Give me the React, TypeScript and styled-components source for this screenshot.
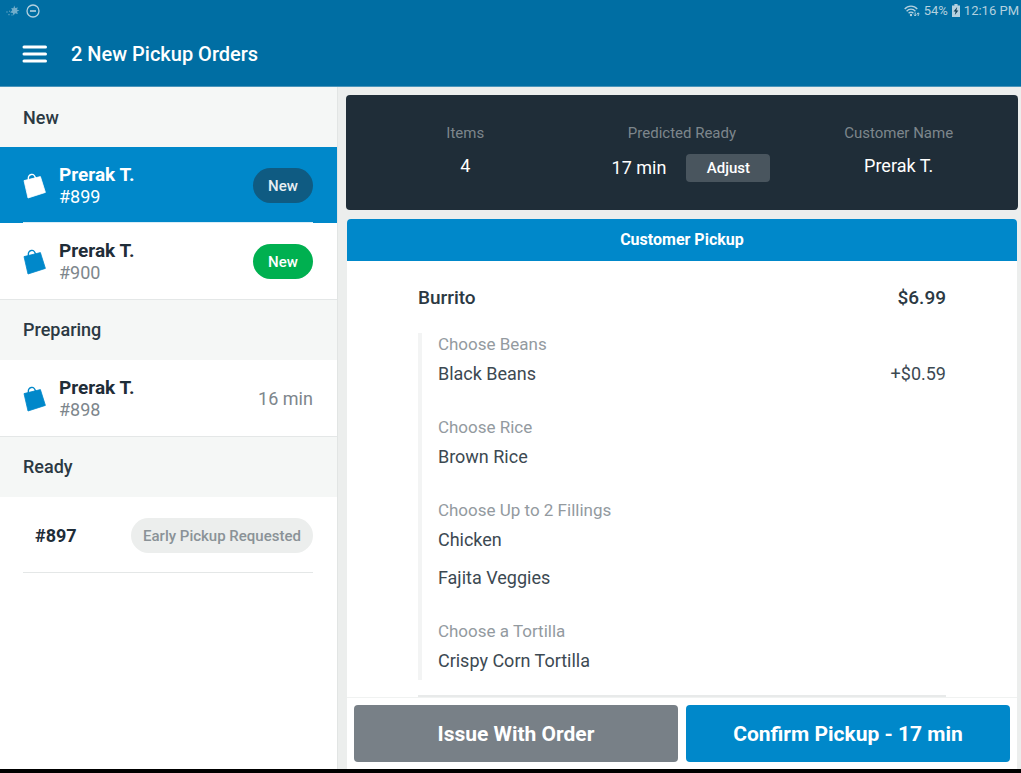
import React from 'react';
import styled, { createGlobalStyle } from 'styled-components';

const GlobalStyle = createGlobalStyle`
  *, *::before, *::after { box-sizing: border-box; }
  body {
    margin: 0;
    background: #000;
    color: #1f2d38;
    font-family: Roboto, "Liberation Sans", sans-serif;
    font-size: 18px;
    line-height: 22px;
  }
  h1, h2, h3, p, ul, dl, dd { margin: 0; padding: 0; }
  button { font: inherit; border: 0; padding: 0; cursor: pointer; }
`;

const Screen = styled.div`
  display: flex;
  flex-direction: column;
  height: 100vh;
  padding-bottom: 4px;
`;

const TopBar = styled.header`
  flex: none;
  background: #006ea3;
  border-bottom: 1px solid #4b95ba;
  color: #fff;
`;

const StatusBar = styled.div`
  display: flex;
  align-items: center;
  justify-content: space-between;
  height: 21px;
  padding: 0 2px 0 6px;
  color: #b4d1df;
  font-size: 13px;
  line-height: 20px;
`;

const StatusGroup = styled.div<{ $gap: number }>`
  display: flex;
  align-items: center;
  gap: ${({ $gap }) => $gap}px;
`;

const TitleRow = styled.div`
  display: flex;
  align-items: center;
  gap: 24px;
  height: 65px;
  padding: 0 22px;
`;

const MenuButton = styled.button`
  display: flex;
  background: none;
  color: inherit;
`;

const Title = styled.h1`
  font-size: 20px;
  line-height: 24px;
  font-weight: 500;
`;

const Body = styled.div`
  flex: 1;
  min-height: 0;
  display: grid;
  grid-template-columns: 33% minmax(0, 1fr);
  background: #eceeed;
`;

const Sidebar = styled.nav`
  background: #fff;
  overflow: hidden;
`;

const SectionTitle = styled.h2`
  height: 61px;
  padding: 19px 23px;
  border-top: 1px solid #e4e7e7;
  background: #f5f7f6;
  color: #2b3943;
  font-size: 18px;
  line-height: 22px;
  font-weight: 500;

  &:first-child {
    height: 60px;
    padding-top: 20px;
    border-top: 0;
  }
`;

const OrderRow = styled.button<{ $active?: boolean }>`
  display: block;
  width: 100%;
  height: 76px;
  padding: 0 24px 0 23px;
  text-align: left;
  background: ${({ $active }) => ($active ? '#0088ca' : '#fff')};
  color: ${({ $active }) => ($active ? '#fff' : '#1f2d38')};
`;

const RowInner = styled.span<{ $divider?: string }>`
  display: flex;
  align-items: center;
  gap: 12px;
  height: 76px;
  padding-top: 2px;
  border-bottom: 1px solid ${({ $divider }) => $divider ?? 'transparent'};
`;

const OrderText = styled.span`
  flex: 1;
  display: flex;
  flex-direction: column;
`;

const OrderName = styled.span`
  font-size: 19px;
  font-weight: 700;
`;

const OrderNumber = styled.span<{ $active?: boolean }>`
  color: ${({ $active }) => ($active ? '#fff' : '#7d868c')};
`;

const ReadyNumber = styled.span`
  flex: 1;
  padding-left: 12px;
  font-weight: 700;
`;

const Wait = styled.span`
  color: #7d868c;
`;

const pillTones = {
  navy: { bg: '#0f5b82', fg: '#e7eff3' },
  green: { bg: '#00b050', fg: '#fff' },
  grey: { bg: '#eceeed', fg: '#8a9297' },
};

const Pill = styled.span<{ $tone: keyof typeof pillTones }>`
  display: flex;
  align-items: center;
  justify-content: center;
  min-width: 60px;
  height: 35px;
  padding: 0 12px;
  border-radius: 18px;
  background: ${({ $tone }) => pillTones[$tone].bg};
  color: ${({ $tone }) => pillTones[$tone].fg};
  font-size: 15px;
  line-height: 20px;
  font-weight: 500;
`;

const Main = styled.main`
  display: flex;
  flex-direction: column;
  gap: 9px;
  min-height: 0;
  padding: 8px 3px 0 8px;
  border-left: 1px solid #e2e5e4;
`;

const Summary = styled.dl`
  flex: none;
  display: grid;
  grid-template-columns: repeat(3, minmax(0, 1fr));
  height: 115px;
  padding: 27px 11px 0;
  border-radius: 4px;
  background: #1f2d38;
  text-align: center;
`;

const Stat = styled.div`
  display: flex;
  flex-direction: column;
  gap: 10px;
`;

const StatLabel = styled.dt`
  color: #7d868c;
  font-size: 15px;
  line-height: 22px;
`;

const StatValue = styled.dd<{ $withAction?: boolean }>`
  display: flex;
  align-items: center;
  justify-content: center;
  gap: 20px;
  height: ${({ $withAction }) => ($withAction ? 28 : 24)}px;
  padding-left: ${({ $withAction }) => ($withAction ? 18 : 0)}px;
  color: #fff;
  line-height: 24px;
`;

const AdjustButton = styled.button`
  width: 84px;
  height: 28px;
  border-radius: 4px;
  background: #49555e;
  color: #fff;
  font-size: 15px;
  line-height: 20px;
  font-weight: 500;
`;

const Ticket = styled.section`
  flex: 1;
  min-height: 0;
  display: flex;
  flex-direction: column;
  margin: 0 1px;
  background: #fff;
  border-radius: 4px 4px 0 0;
  overflow: hidden;
`;

const TicketHeader = styled.h2`
  flex: none;
  padding: 10px;
  background: #0088ca;
  color: #fff;
  text-align: center;
  font-size: 16px;
  line-height: 22px;
  font-weight: 700;
`;

const TicketBody = styled.div`
  flex: 1;
  min-height: 0;
  overflow: hidden;
  padding: 26px 71px 0;
`;

const Item = styled.article`
  padding-bottom: 15px;
  border-bottom: 2px solid #e8eaea;
`;

const Line = styled.div`
  display: flex;
  justify-content: space-between;
`;

const ItemLine = styled(Line)`
  margin-bottom: 24px;
  color: #2b3943;
  font-size: 19px;
  font-weight: 500;
`;

const Options = styled.div`
  display: flex;
  flex-direction: column;
  gap: 23px;
  padding-left: 16px;
  border-left: 4px solid #f3f4f4;
`;

const OptionLabel = styled.h3`
  color: #939a9f;
  font-size: 17px;
  line-height: 22px;
  font-weight: 400;
`;

const OptionLine = styled(Line)`
  padding: 8px 0;
  color: #3c4952;
`;

const Footer = styled.footer`
  flex: none;
  display: grid;
  grid-template-columns: 1fr 1fr;
  gap: 8px;
  padding: 7px;
  border-top: 1px solid #f0f2f1;
`;

const ActionButton = styled.button<{ $primary?: boolean }>`
  height: 57px;
  border-radius: 4px;
  background: ${({ $primary }) => ($primary ? '#0088ca' : '#788087')};
  color: #fff;
  font-size: 21px;
  line-height: 24px;
  font-weight: 700;
`;

const BagIcon = ({ color }: { color: string }) => (
  <svg width="24" height="26" viewBox="0 0 24 26" aria-hidden="true">
    <path d="M1 7.6 17.4 3.6 22.4 19.4 5 25Z" fill={color} stroke={color} strokeWidth="0.8" strokeLinejoin="round" />
    <path d="M5.6 7.2C4.8 3.8 6 2 8.2 1.5 10.4 1 11.8 2.4 12.6 5.4" fill="none" stroke={color} strokeWidth="1.4" />
  </svg>
);

const MenuIcon = () => (
  <svg width="25" height="20" viewBox="0 0 25 20" aria-hidden="true">
    <path d="M2 3H23.5M2 10H23.5M2 17H23.5" stroke="#fff" strokeWidth="3" strokeLinecap="round" />
  </svg>
);

const SparkIcon = () => (
  <svg width="14" height="12" viewBox="0 0 14 12" fill="#8dbdd3" aria-hidden="true">
    <path d="M8.2 0.5 9.2 3 12 2.4 10.8 4.4 13.4 5.4 11 6.5 11.8 9 9 8.2 7.6 10.6 6.8 7.9 4.2 7.4 6.2 5.2 5.2 3 7.4 3.2Z" opacity=".8" />
    <circle cx="1" cy="7" r=".8" opacity=".6" />
    <circle cx="3" cy="9.6" r=".8" opacity=".6" />
    <circle cx="3.6" cy="6.2" r=".7" opacity=".6" />
    <circle cx="6" cy="10" r=".7" opacity=".6" />
  </svg>
);

const DoNotDisturbIcon = () => (
  <svg width="14" height="14" viewBox="0 0 14 14" fill="none" stroke="#b4d1df" aria-hidden="true">
    <circle cx="7" cy="7" r="6" strokeWidth="1.3" />
    <path d="M4 7h6" strokeWidth="1.6" />
  </svg>
);

const WifiIcon = () => (
  <svg width="16" height="12" viewBox="0 0 16 12" fill="none" stroke="#b4d1df" aria-hidden="true">
    <path d="M.7 4C4 .2 10 .2 13.3 4M2.6 6.2C5 3.5 9 3.5 11.4 6.2M4.6 8.3C6 6.8 8 6.8 9.4 8.3" strokeWidth="1.3" />
    <circle cx="7" cy="10" r="1.2" fill="#b4d1df" stroke="none" />
    <path d="M11.2 7.4v3.4M10 9.6l1.2 1.4 1.2-1.4M14.2 11V8M13 9.2l1.2-1.4 1.2 1.4" strokeWidth="1" />
  </svg>
);

const BatteryIcon = () => (
  <svg width="8" height="13" viewBox="0 0 8 13" aria-hidden="true">
    <path d="M2.4 0h3.2v1.4H8V13H0V1.4h2.4Z" fill="#b4d1df" />
    <path d="M5.2 3 1.6 7.6h2L2.8 11 6.4 6.4h-2Z" fill="#123f57" />
  </svg>
);

type Option = { label: string; choices: { name: string; price?: string }[] };

const options: Option[] = [
  { label: 'Choose Beans', choices: [{ name: 'Black Beans', price: '+$0.59' }] },
  { label: 'Choose Rice', choices: [{ name: 'Brown Rice' }] },
  { label: 'Choose Up to 2 Fillings', choices: [{ name: 'Chicken' }, { name: 'Fajita Veggies' }] },
  { label: 'Choose a Tortilla', choices: [{ name: 'Crispy Corn Tortilla' }] },
];

export default function App() {
  return (
    <>
      <GlobalStyle />
      <Screen>
        <TopBar>
          <StatusBar>
            <StatusGroup $gap={6}>
              <SparkIcon />
              <DoNotDisturbIcon />
            </StatusGroup>
            <StatusGroup $gap={4}>
              <WifiIcon />
              <span>54%</span>
              <BatteryIcon />
              <span>12:16 PM</span>
            </StatusGroup>
          </StatusBar>
          <TitleRow>
            <MenuButton aria-label="Menu">
              <MenuIcon />
            </MenuButton>
            <Title>2 New Pickup Orders</Title>
          </TitleRow>
        </TopBar>

        <Body>
          <Sidebar>
            <SectionTitle>New</SectionTitle>
            <OrderRow $active>
              <RowInner $divider="#d9edf7">
                <BagIcon color="#fff" />
                <OrderText>
                  <OrderName>Prerak T.</OrderName>
                  <OrderNumber $active>#899</OrderNumber>
                </OrderText>
                <Pill $tone="navy">New</Pill>
              </RowInner>
            </OrderRow>
            <OrderRow>
              <RowInner>
                <BagIcon color="#0088ca" />
                <OrderText>
                  <OrderName>Prerak T.</OrderName>
                  <OrderNumber>#900</OrderNumber>
                </OrderText>
                <Pill $tone="green">New</Pill>
              </RowInner>
            </OrderRow>
            <SectionTitle>Preparing</SectionTitle>
            <OrderRow>
              <RowInner>
                <BagIcon color="#0088ca" />
                <OrderText>
                  <OrderName>Prerak T.</OrderName>
                  <OrderNumber>#898</OrderNumber>
                </OrderText>
                <Wait>16 min</Wait>
              </RowInner>
            </OrderRow>
            <SectionTitle>Ready</SectionTitle>
            <OrderRow>
              <RowInner $divider="#e4e7e7">
                <ReadyNumber>#897</ReadyNumber>
                <Pill $tone="grey">Early Pickup Requested</Pill>
              </RowInner>
            </OrderRow>
          </Sidebar>

          <Main>
            <Summary>
              <Stat>
                <StatLabel>Items</StatLabel>
                <StatValue>4</StatValue>
              </Stat>
              <Stat>
                <StatLabel>Predicted Ready</StatLabel>
                <StatValue $withAction>
                  17 min
                  <AdjustButton>Adjust</AdjustButton>
                </StatValue>
              </Stat>
              <Stat>
                <StatLabel>Customer Name</StatLabel>
                <StatValue>Prerak T.</StatValue>
              </Stat>
            </Summary>

            <Ticket>
              <TicketHeader>Customer Pickup</TicketHeader>
              <TicketBody>
                <Item>
                  <ItemLine>
                    <span>Burrito</span>
                    <span>$6.99</span>
                  </ItemLine>
                  <Options>
                    {options.map((option) => (
                      <div key={option.label}>
                        <OptionLabel>{option.label}</OptionLabel>
                        {option.choices.map((choice) => (
                          <OptionLine key={choice.name}>
                            <span>{choice.name}</span>
                            {choice.price && <span>{choice.price}</span>}
                          </OptionLine>
                        ))}
                      </div>
                    ))}
                  </Options>
                </Item>
              </TicketBody>
              <Footer>
                <ActionButton>Issue With Order</ActionButton>
                <ActionButton $primary>Confirm Pickup - 17 min</ActionButton>
              </Footer>
            </Ticket>
          </Main>
        </Body>
      </Screen>
    </>
  );
}
